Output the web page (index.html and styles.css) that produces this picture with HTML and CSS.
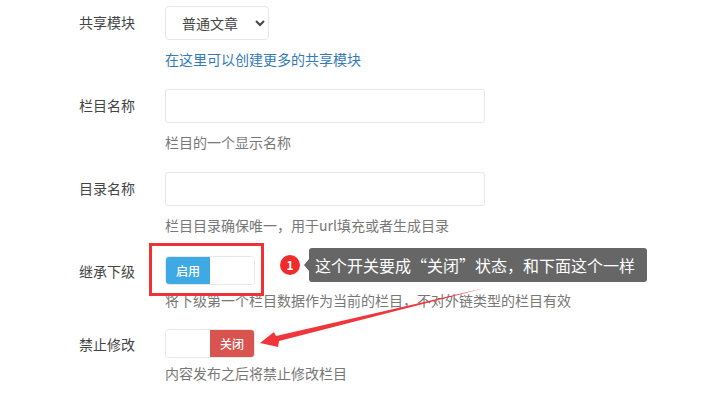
FILE: index.html
```html
<!DOCTYPE html>
<html lang="zh-CN">

<head>
    <meta charset="UTF-8">
    <title>栏目设置</title>
    <link rel="stylesheet" href="styles.css">
</head>

<body>
    <div id="app">
        <form class="form">
            <div class="row">
                <label class="label">共享模块</label>
                <div class="field">
                    <select class="select">
                        <option>普通文章</option>
                    </select>
                    <a class="help link">在这里可以创建更多的共享模块</a>
                </div>
            </div>
            <div class="row">
                <label class="label">栏目名称</label>
                <div class="field">
                    <input class="input" type="text">
                    <span class="help">栏目的一个显示名称</span>
                </div>
            </div>
            <div class="row">
                <label class="label">目录名称</label>
                <div class="field">
                    <input class="input" type="text">
                    <span class="help">栏目目录确保唯一，用于url填充或者生成目录</span>
                </div>
            </div>
            <div class="row row-short">
                <label class="label">继承下级</label>
                <div class="field">
                    <div class="switch">
                        <span class="switch-on">启用</span>
                        <span class="switch-blank"></span>
                    </div>
                    <span class="help">将下级第一个栏目数据作为当前的栏目，不对外链类型的栏目有效</span>
                </div>
            </div>
            <div class="row row-short">
                <label class="label">禁止修改</label>
                <div class="field">
                    <div class="switch">
                        <span class="switch-blank"></span>
                        <span class="switch-off">关闭</span>
                    </div>
                    <span class="help">内容发布之后将禁止修改栏目</span>
                </div>
            </div>
        </form>

        <div class="mark-box"></div>
        <div class="mark-num">1</div>
        <div class="mark-tip">这个开关要成“关闭”状态，和下面这个一样</div>
        <svg class="mark-arrow" width="710" height="405" viewBox="0 0 710 405">
            <path d="M260 343 L274 332 L276 336 L485 288 L279 341 L278 347 Z" fill="#f0353b" />
        </svg>
    </div>
</body>

</html>
```

FILE: styles.css
```css
html,
body {
    width: 100%;
    height: 100%;
    margin: 0;
    padding: 0;
}

body {
    background-color: #fff;
    overflow: hidden;
    font-family: "Noto Sans CJK SC", "Liberation Sans", sans-serif;
    font-size: 14px;
    color: #555;
}

#app {
    width: 710px;
    height: 405px;
    position: relative;
    overflow: hidden;
}

.form {
    display: flex;
    flex-direction: column;
    gap: 15px;
    padding: 6px 0 0 79px;
}

.row {
    display: flex;
    height: 68px;
}

.row-short {
    height: 58px;
}

.label {
    width: 86px;
    line-height: 33px;
    color: #444;
    flex-shrink: 0;
}

.field {
    display: flex;
    flex-direction: column;
    align-items: flex-start;
}

.select {
    width: 104px;
    height: 34px;
    padding: 0 8px 0 12px;
    border: 1px solid #e4e6ea;
    border-radius: 4px;
    background-color: #fff;
    font: inherit;
    color: #444;
    outline: none;
}

.input {
    width: 320px;
    height: 34px;
    box-sizing: border-box;
    border: 1px solid #e4e6ea;
    border-radius: 3px;
    background-color: #fff;
    outline: none;
}

.help {
    margin-top: 9px;
    line-height: 20px;
    color: #777;
}

.link {
    color: #337ab7;
}

.switch {
    display: flex;
    width: 90px;
    height: 29px;
    margin-top: 1px;
    box-sizing: border-box;
    border: 1px solid #e6e8ee;
    border-radius: 4px;
    overflow: hidden;
    font-size: 12px;
    font-weight: 500;
    line-height: 27px;
    color: #fff;
    text-align: center;
}

.switch + .help {
    margin-top: 5px;
}

.switch-on,
.switch-off,
.switch-blank {
    width: 44px;
}

.switch-on {
    background-color: #3fa9e4;
}

.switch-off {
    background-color: #d9534f;
}

.switch-blank {
    background-color: #fff;
}

.mark-box {
    position: absolute;
    left: 149px;
    top: 243px;
    width: 115px;
    height: 53px;
    box-sizing: border-box;
    border: 3px solid #ee3338;
}

.mark-num {
    position: absolute;
    left: 280px;
    top: 255px;
    width: 20px;
    height: 20px;
    border-radius: 50%;
    background-color: #ee2c2c;
    color: #fff;
    font-size: 12px;
    font-weight: bold;
    line-height: 20px;
    text-align: center;
}

.mark-tip {
    position: absolute;
    left: 309px;
    top: 248px;
    width: 338px;
    height: 34px;
    box-sizing: border-box;
    padding-left: 6px;
    border-radius: 3px;
    background-color: #666;
    color: #fff;
    font-size: 16px;
    line-height: 34px;
    white-space: nowrap;
}

.mark-tip::before {
    content: "";
    position: absolute;
    left: -5px;
    top: 11px;
    border-style: solid;
    border-width: 6px 5px 6px 0;
    border-color: transparent #666 transparent transparent;
}

.mark-arrow {
    position: absolute;
    left: 0;
    top: 0;
}
```
